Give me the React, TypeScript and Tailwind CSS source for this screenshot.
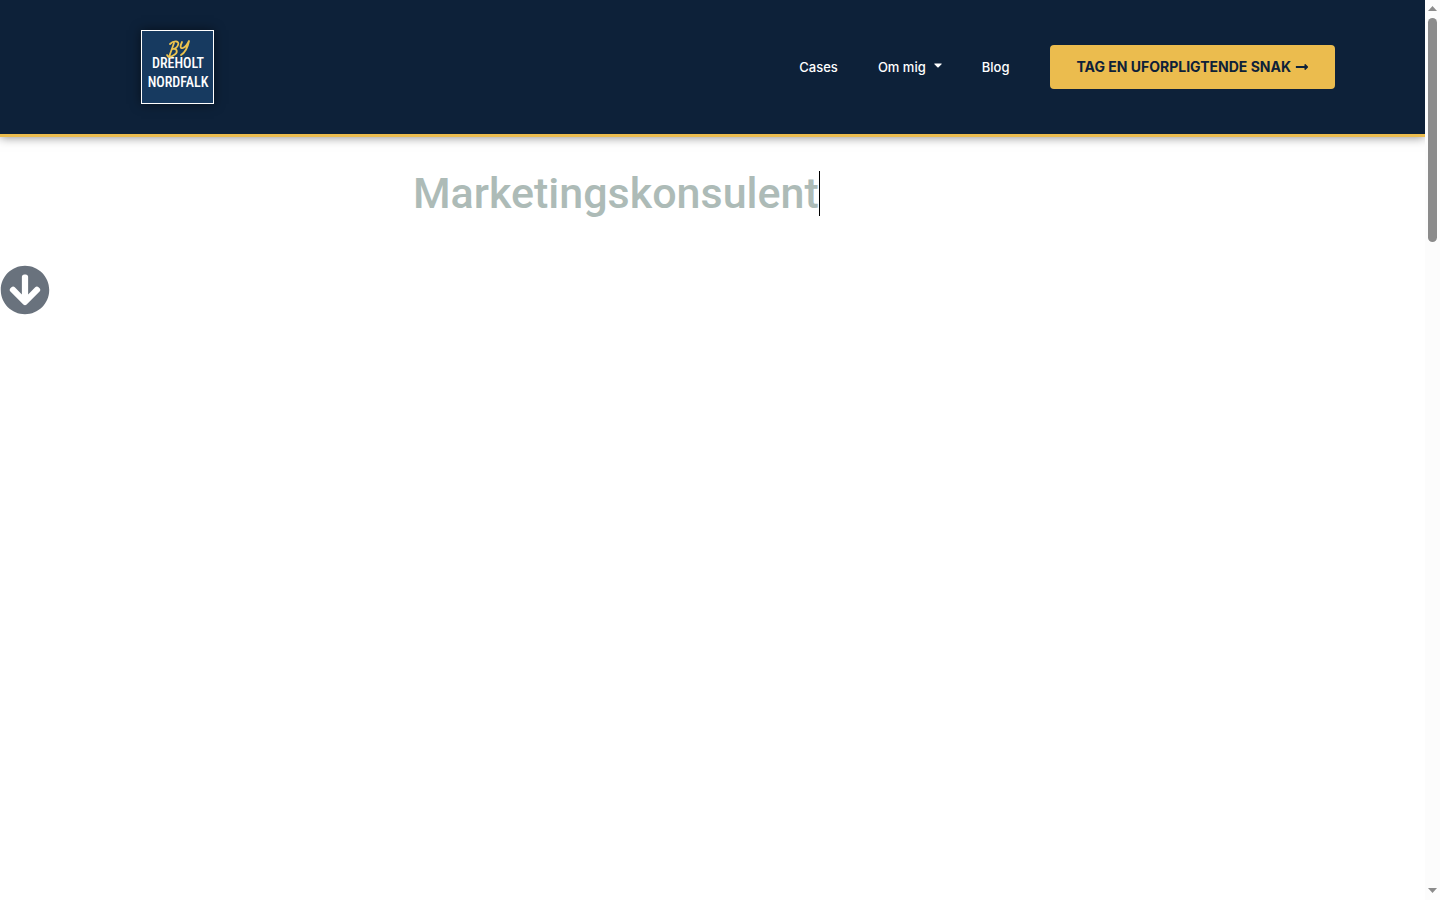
import React from 'react';
import { FaArrowCircleDown, FaCaretDown, FaLongArrowAltRight } from 'react-icons/fa';

const Logo: React.FC = () => (
  <a
    href="#"
    aria-label="By Dreholt Nordfalk"
    className="block h-[74px] w-[73px] border border-white bg-[#173a60] shadow-[0_0_10px_rgba(0,0,0,0.5)]"
  >
    <svg viewBox="0 0 71 72" className="size-full" fontFamily="'Roboto Condensed', Roboto, sans-serif">
      <text x="36" y="37" textAnchor="middle" fontSize="14" fontWeight="500" fill="#fff">
        DREHOLT
      </text>
      <text x="36" y="56" textAnchor="middle" fontSize="14" fontWeight="500" fill="#fff">
        NORDFALK
      </text>
      {/* brush lettering */}
      <g fill="none" stroke="#ecc34e" strokeWidth="1.8" strokeLinecap="round" strokeLinejoin="round">
        <path d="M27 26 L32 12 M28 13 C32 9 38 10 36 14 C35 17 32 18 30 18 C36 17 36 22 32 24 C29 26 26 27 25 24" />
        <path d="M40 11 C38 15 38 18 41 17 C44 16 46 12 47 10 C46 15 44 21 39 24" />
      </g>
    </svg>
  </a>
);

const Header: React.FC = () => (
  <header className="relative border-b-3 border-[#ebbc4e] bg-[#0d2139] shadow-[0_0_10px_rgba(0,0,0,0.5)]">
    <div className="flex items-center justify-between py-[30px] pl-[141px] pr-[90px]">
      <Logo />
      <div className="flex items-center gap-[41px]">
        <nav className="flex items-center gap-10 text-[13px] leading-[22px] font-medium text-white">
          <a href="#cases">Cases</a>
          <a href="#om-mig" className="flex items-start gap-2">
            Om mig
            <FaCaretDown className="h-[18px] w-2" />
          </a>
          <a href="#blog">Blog</a>
        </nav>
        <a
          href="#kontakt"
          className="flex h-11 items-center gap-1 rounded bg-[#ebbc4e] px-[26px] text-[14px] leading-5 font-bold text-[#0d2139]"
        >
          TAG EN UFORPLIGTENDE SNAK
          <FaLongArrowAltRight className="size-[14px]" />
        </a>
      </div>
    </div>
  </header>
);

const Scrollbar: React.FC = () => (
  <div aria-hidden="true" className="flex w-[15px] shrink-0 flex-col items-center justify-between bg-[#fcfcfc] pb-[7px] pt-[6px]">
    <div className="flex flex-col items-center gap-[7px]">
      <svg viewBox="0 0 9 5" className="h-[5px] w-[9px] fill-[#8b8b8b]">
        <path d="M0 5 L4.500 0 L9 5 Z" />
      </svg>
      <div className="h-56 w-[9px] rounded-full bg-[#8b8b8b]" />
    </div>
    <svg viewBox="0 0 9 5" className="h-[5px] w-[9px] fill-[#8b8b8b]">
      <path d="M0 0 L4.500 5 L9 0 Z" />
    </svg>
  </div>
);

const App: React.FC = () => (
  <div className="flex min-h-screen bg-white font-['Inter',sans-serif]">
    <div className="min-w-0 flex-1 overflow-hidden">
      <Header />
      <main>
        <h1 className="flex items-center pl-[413px] pt-[34px] font-['Roboto',sans-serif] text-[43px] leading-[45px] font-medium text-[#adbbb7]">
          <span className="border-r border-black">Marketingskonsulent</span>
        </h1>
        <a href="#indhold" aria-label="Rul ned" className="mt-[49px] inline-block text-[#69727d]">
          <FaArrowCircleDown className="size-[50px]" />
        </a>
      </main>
    </div>
    <Scrollbar />
  </div>
);

export default App;
